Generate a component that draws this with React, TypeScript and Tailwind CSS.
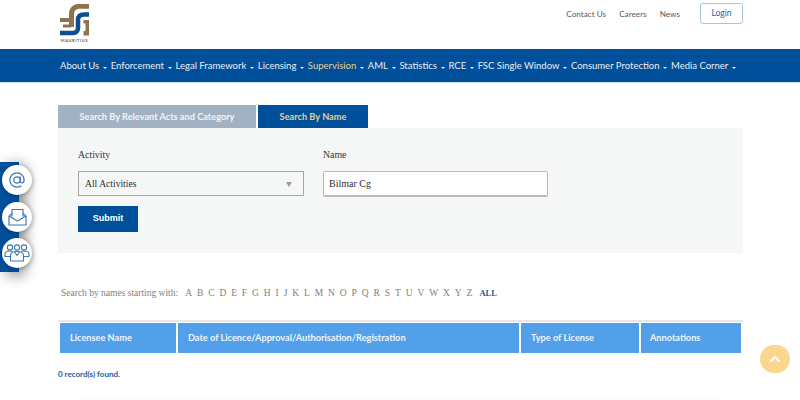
import React from 'react';

const navItems = ['About Us', 'Enforcement', 'Legal Framework', 'Licensing', 'Supervision', 'AML', 'Statistics', 'RCE', 'FSC Single Window', 'Consumer Protection', 'Media Corner'];
const letters = 'ABCDEFGHIJKLMNOPQRSTUVWXYZ'.split('');

function Logo() {
    return (
        <svg width="29" height="32" viewBox="0 0 29 32" fill="none">
            {/* brown pipe */}
            <path d="M29 2.2H20C14.5 2.2 11.5 5 11.5 10V23" stroke="#8f7350" strokeWidth="5" />
            <path d="M0 16H11" stroke="#8f7350" strokeWidth="4" />
            <path d="M3 22H11" stroke="#8f7350" strokeWidth="3" />
            {/* blue pipe */}
            <path d="M29 10.5H24C20 10.5 18 12.5 18 16V24C18 27 16 29 13 29H0" stroke="#0b4f8f" strokeWidth="4.5" />
            {/* brown bracket */}
            <path d="M29 16H23.5V19.5H25.5V27H23.5V31.5H29Z" fill="#8f7350" />
        </svg>
    );
}

function SideIcons() {
    return (
        <div className="absolute left-0 top-[162px] w-[19px] h-[110px] bg-[#004f9b] shadow-[6px_3px_14px_rgba(0,0,0,0.45)]">
            <div className="absolute left-[2px] top-[3px] w-[30px] h-[30px] rounded-full bg-white shadow-[1px_1px_5px_rgba(0,0,0,0.3)] flex items-center justify-center">
                <svg width="18" height="18" viewBox="0 0 24 24" fill="none" stroke="#3f78b5" strokeWidth="1.7" strokeLinecap="round">
                    <circle cx="12" cy="12" r="4.2" />
                    <path d="M16.2 7.8V13.5C16.2 16.8 21.5 16.5 21.5 12C21.5 6.5 17.2 2.5 12 2.5C6.5 2.5 2.5 6.8 2.5 12C2.5 17.5 6.8 21.5 12 21.5C14 21.5 15.8 21 17.3 20" />
                </svg>
            </div>
            <div className="absolute left-[2px] top-[40px] w-[30px] h-[30px] rounded-full bg-white shadow-[1px_1px_5px_rgba(0,0,0,0.3)] flex items-center justify-center">
                <svg width="19" height="18" viewBox="0 0 19 18" fill="none" stroke="#3f78b5" strokeWidth="1.2" strokeLinejoin="round">
                    <path d="M1 8V17H18V8" />
                    <path d="M1 8L4 5.5M18 8L15 5.5" />
                    <path d="M4 8.5V1.5H15V8.5" />
                    <path d="M1 8L9.5 13L18 8" />
                </svg>
            </div>
            <div className="absolute left-[2px] top-[76px] w-[30px] h-[30px] rounded-full bg-white shadow-[1px_1px_5px_rgba(0,0,0,0.3)] flex items-center justify-center">
                <svg width="26" height="18" viewBox="0 0 26 18" fill="none" stroke="#3f78b5" strokeWidth="1.1" strokeLinejoin="round">
                    <circle cx="6" cy="3.5" r="2.6" />
                    <circle cx="13" cy="3.5" r="2.6" />
                    <circle cx="20" cy="3.5" r="2.6" />
                    <path d="M6.5 12.5H1V10C1 8 3 7 6 7C7 7 8 7.2 8.8 7.6" />
                    <path d="M19.5 12.5H25V10C25 8 23 7 20 7C19 7 18 7.2 17.2 7.6" />
                    <path d="M6.5 17V11.5C6.5 9 9 7.5 13 7.5C17 7.5 19.5 9 19.5 11.5V17Z" />
                    <path d="M10.5 7.8L13 11.5L15.5 7.8" />
                </svg>
            </div>
        </div>
    );
}

export default function App() {
    return (
        <div className="relative w-[800px] h-[400px] overflow-hidden bg-white font-['Lato','Liberation_Sans',sans-serif]">
            {/* Top bar */}
            <div className="h-[49px] pl-[60px] pr-[57px] flex justify-between">
                <div className="pt-[4px] flex flex-col items-center w-[29px]">
                    <Logo />
                    <div className="text-[4px] leading-[4px] mt-[3px] font-bold text-[#6b5a45] tracking-[0.6px] whitespace-nowrap">MAURITIUS</div>
                </div>
                <div className="flex items-start pt-[3px]">
                    <div className="flex gap-[13px] text-[8.2px] leading-[20px] text-[#555b61] pt-[1px] mr-[20px]">
                        <span>Contact Us</span>
                        <span>Careers</span>
                        <span>News</span>
                    </div>
                    <button className="w-[43px] h-[21px] rounded-[3px] border border-[#a9c4de] text-[8.5px] text-[#1f5c99]">Login</button>
                </div>
            </div>

            {/* Main nav */}
            <nav className="h-[34px] bg-[#004f9b] border-b border-[#cfe0ee] pl-[60px] pt-[2px] flex items-center gap-[3.5px] text-[9.5px] text-[#e8eef5] whitespace-nowrap">
                {navItems.map(item => (
                    <span key={item} className={`flex items-center ${item === 'Supervision' ? 'text-[#e3d18f]' : ''}`}>
                        {item}
                        <span className="ml-[4px] mt-[3px] w-0 h-0 border-x-[2.5px] border-x-transparent border-t-[2.5px] border-t-[#e8eef5]"></span>
                    </span>
                ))}
            </nav>

            <div className="pl-[58px] w-[743px] pt-[22px] box-content">
                {/* Tabs */}
                <div className="flex gap-[2px] h-[23px] text-[9.2px] font-bold">
                    <div className="w-[198px] pt-px bg-[#a3b2c2] text-[#f2f4f6] flex items-center justify-center">Search By Relevant Acts and Category</div>
                    <div className="w-[110px] pt-px bg-[#004f9b] text-[#e3d18f] flex items-center justify-center">Search By Name</div>
                </div>

                {/* Search panel */}
                <div className="w-[685px] h-[125px] bg-[#f5f7f7] pl-[20px] pt-[20px] font-['Liberation_Serif',serif] text-[#333]">
                    <div className="flex gap-[19px]">
                        <div className="w-[226px]">
                            <label className="block text-[9.8px] leading-[14px] mb-[9px]">Activity</label>
                            <div className="h-[25px] pt-px border border-[#a5a5a5] bg-[#f5f7f7] flex items-center justify-between pl-[6px] pr-[11px] text-[9.6px] text-[#2e2e2e]">
                                All Activities
                                <span className="w-0 h-0 border-x-[3.5px] border-x-transparent border-t-[5px] border-t-[#999]"></span>
                            </div>
                        </div>
                        <div className="w-[225px]">
                            <label className="block text-[9.8px] leading-[14px] mb-[9px]">Name</label>
                            <div className="h-[26px] rounded-[2px] border border-[#bbb] border-b-2 bg-white flex items-center pl-[5px] text-[10px] text-[#2e2e2e]">Bilmar Cg</div>
                        </div>
                    </div>
                    <button className="mt-[9px] w-[60px] h-[26px] bg-[#004f9b] text-white text-[9px] font-bold font-['Liberation_Sans',sans-serif]">Submit</button>
                </div>

                {/* Alphabet filter */}
                <div className="mt-[34px] pl-[3px] flex items-center font-['Liberation_Serif',serif] text-[9.5px] leading-[12px] text-[#808080]">
                    <span className="mr-[7px]">Search by names starting with:</span>
                    <span className="flex gap-[4.9px]">
                        {letters.map(l => <span key={l}>{l}</span>)}
                    </span>
                    <span className="ml-[7px] text-[8.5px] font-bold text-[#1f5c99]">ALL</span>
                </div>

                {/* Results table */}
                <div className="mt-[21px] w-[685px] border-t-2 border-[#e3e8ee] pt-[1px] px-[2px]">
                    <div className="flex gap-[2px] h-[30px] text-[9.2px] font-bold text-[#eef5fc]">
                        <div className="w-[116px] bg-[#52a0ea] flex items-center pl-[10px]">Licensee Name</div>
                        <div className="w-[341px] bg-[#52a0ea] flex items-center pl-[10px]">Date of Licence/Approval/Authorisation/Registration</div>
                        <div className="w-[118px] bg-[#52a0ea] flex items-center pl-[10px]">Type of License</div>
                        <div className="w-[100px] bg-[#52a0ea] flex items-center pl-[9px]">Annotations</div>
                    </div>
                </div>
                <div className="mt-[16px] text-[8px] leading-[10px] font-bold text-[#1f5c99]">0 record(s) found.</div>
                <div className="mt-[19px] ml-[20px] w-[640px] h-[3px] bg-[#fcfcfc]"></div>
            </div>

            <SideIcons />

            {/* Back to top */}
            <div className="absolute left-[760px] top-[345px] w-[30px] h-[28px] rounded-full bg-[#fad78c] flex items-center justify-center">
                <svg width="12" height="8" viewBox="0 0 12 8" fill="none" stroke="#fff" strokeWidth="2" strokeLinecap="round"><path d="M2 6L6 2L10 6" /></svg>
            </div>
        </div>
    );
}
